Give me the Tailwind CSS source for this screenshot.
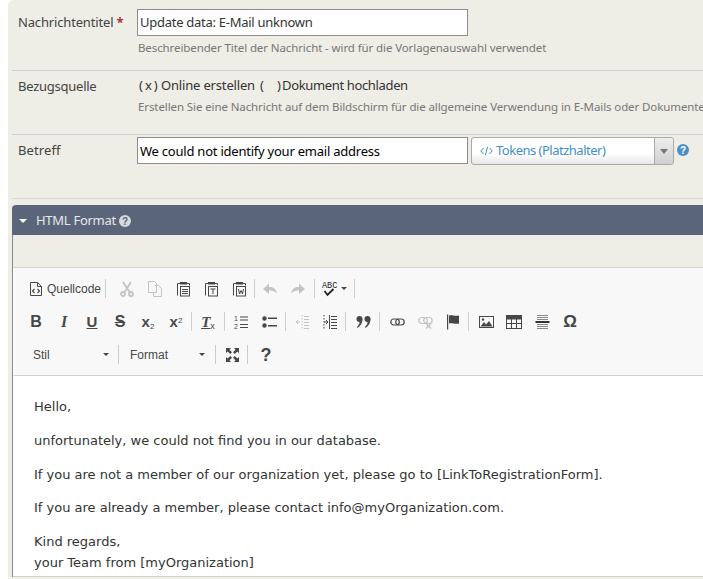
<!DOCTYPE html>
<html lang="de">
<head>
    <meta charset="UTF-8">
    <title>Nachricht bearbeiten</title>
    <script src="https://cdn.jsdelivr.net/npm/@tailwindcss/browser@4"></script>
</head>
<body class="bg-white">
<div class="w-[703px] h-[579px] overflow-hidden pl-2 font-['Noto_Sans',sans-serif] text-[13px]">
    <div class="w-[760px] bg-[#eeede6] rounded-tl-md pl-1 pb-2">
        <!-- Nachrichtentitel -->
        <div class="h-[71px] border-b border-[#cfd2da] flex">
            <label class="w-[125px] pl-[6px] pt-[13px] leading-[18px] text-[#444] tracking-[-0.16px]">Nachrichtentitel <span class="text-[#a33] font-bold">*</span></label>
            <div class="pt-[9px]">
                <input class="block w-[331px] h-[27px] bg-white border border-[#8c8c8c] px-[2px] pb-[2px] text-[13px] text-[#333] tracking-[-0.27px]" value="Update data: E-Mail unknown">
                <p class="mt-[4px] ml-px text-[11.5px] leading-[16px] text-[#777] whitespace-nowrap tracking-[-0.1px]">Beschreibender Titel der Nachricht - wird für die Vorlagenauswahl verwendet</p>
            </div>
        </div>
        <!-- Bezugsquelle -->
        <div class="h-[64px] border-b border-[#cfd2da] flex">
            <label class="w-[125px] pl-[6px] pt-[6px] leading-[18px] text-[#444] tracking-[-0.25px]">Bezugsquelle</label>
            <div class="pt-[5px]">
                <div class="flex leading-[18px] text-[#333] whitespace-nowrap">
                    <span class="ml-[2px] w-[22px] tracking-[2px]">(x)</span><span class="w-[99px] tracking-[-0.17px]">Online erstellen</span><span class="w-[22px] whitespace-pre tracking-[-0.1px]">(    )</span><span class="tracking-[-0.35px]">Dokument hochladen</span>
                </div>
                <p class="mt-[5px] ml-px text-[11.5px] leading-[16px] text-[#777] whitespace-nowrap tracking-[-0.1px]">Erstellen Sie eine Nachricht auf dem Bildschirm für die allgemeine Verwendung in E-Mails oder Dokumenten</p>
            </div>
        </div>
        <!-- Betreff -->
        <div class="h-[64px] border-b border-[#d9d9d2] flex">
            <label class="w-[125px] pl-[6px] pt-[6px] leading-[18px] text-[#444] tracking-[0.1px]">Betreff</label>
            <div class="pt-[2px] flex items-start">
                <input class="block w-[331px] h-[27px] bg-white border border-[#8c8c8c] px-[2px] text-[13px] text-black tracking-[-0.23px]" value="We could not identify your email address">
                <div class="ml-[3px] w-[203px] h-[28px] flex rounded-[3px] border border-[#aaa] bg-linear-to-b from-white from-60% to-[#e6e6e6]">
                    <div class="flex-1 flex items-center pl-[8px] text-[#3f8fcb] gap-[3px] tracking-[-0.5px]">
                        <svg width="13" height="10" viewBox="0 0 13 10" fill="none" stroke="currentColor" stroke-width="1"><path d="M3.5 2 .8 5l2.7 3M9.5 2l2.7 3-2.7 3M7.6 .8 5.4 9.2"/></svg>
                        <span>Tokens (Platzhalter)</span>
                    </div>
                    <div class="w-[19px] border-l border-[#aaa] rounded-r-[3px] bg-linear-to-b from-[#eee] to-[#cfcfcf] flex items-center justify-center">
                        <span class="w-0 h-0 border-x-[4px] border-x-transparent border-t-[5px] border-t-[#777] mt-px"></span>
                    </div>
                </div>
                <svg class="ml-[3px] mt-[7px]" width="12" height="12" viewBox="0 0 12 12"><circle cx="6" cy="6" r="6" fill="#4a90c8"/><text x="6" y="9.5" text-anchor="middle" font-size="10" font-weight="700" font-family="Liberation Sans" fill="#fff">?</text></svg>
            </div>
        </div>

        <!-- HTML Format panel -->
        <div class="mt-[6px]">
            <div class="h-[30px] bg-[#5b6579] rounded-tl-[4px] flex items-center pl-[7px] pt-px text-[#e6e8ec] tracking-[-0.28px]">
                <span class="w-0 h-0 border-x-[4px] border-x-transparent border-t-[4px] border-t-white"></span>
                <span class="ml-[9px]">HTML Format</span>
                <svg class="ml-[3px]" width="12" height="12" viewBox="0 0 12 12"><circle cx="6" cy="6" r="6" fill="#d5d8de"/><text x="6" y="9.5" text-anchor="middle" font-size="10" font-weight="700" font-family="Liberation Sans" fill="#5b6579">?</text></svg>
            </div>
            <div class="border-l border-[#8a8a8a]">
                <div class="h-[32px]"></div>
                <!-- toolbar -->
                <div class="h-[109px] bg-[#f8f8f8] border-y border-[#d1d1d1] border-l border-l-white pt-[4px] font-['Liberation_Sans',sans-serif] text-[12px] text-[#474747]">
                    <!-- row 1 -->
                    <div class="h-[33px] flex items-center pl-[15px]">
                        <svg width="14" height="16" viewBox="0 0 14 16" fill="none" stroke="#474747"><path d="M1.5 1.500h7l4 4v9h-11z"/><path d="M8.500 1.500v4h4"/><path d="M5.500 8 3.500 10l2 2M8.500 8l2 2-2 2" stroke-width="1.200"/></svg>
                        <span class="ml-[4px] w-[58px]">Quellcode</span>
                        <i class="block w-px h-[19px] bg-[#cdcdcd]"></i>
                        <span class="ml-[7px] w-7 h-4 flex justify-center text-[#c4c4c4]">
                            <svg width="16" height="16" viewBox="0 0 16 16" fill="none" stroke="currentColor" stroke-width="1.800"><path d="M4 1 10.500 11M12 1 5.500 11"/><circle cx="4" cy="13" r="2"/><circle cx="12" cy="13" r="2"/></svg>
                        </span>
                        <span class="w-7 h-4 flex justify-center text-[#c4c4c4]">
                            <svg width="16" height="16" viewBox="0 0 16 16" fill="none" stroke="currentColor"><path d="M1.500 .500h6l2 2v9h-8z"/><path d="M7.500 4.500h4l3 3v8h-8v-4"/></svg>
                        </span>
                        <span class="w-7 h-4 flex justify-center">
                            <svg width="15" height="16" viewBox="0 0 15 16" fill="none" stroke="currentColor"><path d="M4 2.500H1.500v12M11 2.500h2.500v2"/><rect x="4.500" y="5.500" width="9" height="9.500" fill="#f8f8f8"/><path d="M6 8.500h6M6 10.500h6M6 12.500h6"/><rect x="4" y="1" width="7" height="2.500" fill="currentColor" stroke="none"/></svg>
                        </span>
                        <span class="w-7 h-4 flex justify-center">
                            <svg width="15" height="16" viewBox="0 0 15 16" fill="none" stroke="currentColor"><path d="M4 2.500H1.500v12M11 2.500h2.500v2"/><rect x="4.500" y="5.500" width="9" height="9.500" fill="#f8f8f8"/><path d="M6.500 8h5M9 8v5"/><rect x="4" y="1" width="7" height="2.500" fill="currentColor" stroke="none"/></svg>
                        </span>
                        <span class="w-7 h-4 flex justify-center">
                            <svg width="15" height="16" viewBox="0 0 15 16" fill="none" stroke="currentColor"><path d="M4 2.500H1.500v12M11 2.500h2.500v2"/><rect x="4.500" y="5.500" width="9" height="9.500" fill="#f8f8f8"/><path d="M6.500 8l1 5 1.500-3.500 1.500 3.500 1-5"/><rect x="4" y="1" width="7" height="2.500" fill="currentColor" stroke="none"/></svg>
                        </span>
                        <i class="ml-[1px] block w-px h-[19px] bg-[#cdcdcd]"></i>
                        <span class="ml-[1px] w-7 h-4 flex justify-center text-[#c4c4c4]">
                            <svg width="16" height="16" viewBox="0 0 16 16" fill="currentColor"><path d="M1 8l6-5.500V6h1c4 0 6 2.500 7 6.500C13 10.500 11 9.500 8 9.500H7V13z"/></svg>
                        </span>
                        <span class="w-7 h-4 flex justify-center text-[#c4c4c4]">
                            <svg width="16" height="16" viewBox="0 0 16 16" fill="currentColor"><path d="M15 8 9 2.500V6H8C4 6 2 8.500 1 12.500 3 10.500 5 9.500 8 9.500h1V13z"/></svg>
                        </span>
                        <i class="ml-[2px] block w-px h-[19px] bg-[#cdcdcd]"></i>
                        <span class="ml-[7px] w-[16px] h-4">
                            <svg width="16" height="16" viewBox="0 0 16 16"><text x="0" y="7" font-size="8.500" font-family="Liberation Mono" fill="#222">ABC</text><path d="M2.500 10l3 4 6-6" fill="none" stroke="#222" stroke-width="1.800"/></svg>
                        </span>
                        <span class="ml-[3px] w-0 h-0 border-x-[3px] border-x-transparent border-t-[3px] border-t-[#474747]"></span>
                        <i class="ml-[7px] block w-px h-[19px] bg-[#cdcdcd]"></i>
                    </div>
                    <!-- row 2 -->
                    <div class="h-[33px] flex items-center pl-[8px]">
                        <span class="w-7 text-center text-[16px] font-bold leading-4">B</span>
                        <span class="w-7 text-center text-[16px] font-bold italic leading-4 font-['Liberation_Serif',serif]">I</span>
                        <span class="w-7 text-center text-[15px] font-bold underline leading-4">U</span>
                        <span class="w-7 text-center text-[16px] font-bold line-through leading-4">S</span>
                        <span class="w-7 text-center text-[15px] font-bold leading-4">x<sub class="text-[8px] font-normal">2</sub></span>
                        <span class="w-7 text-center text-[15px] font-bold leading-4">x<sup class="text-[8px] font-normal">2</sup></span>
                        <i class="block w-px h-[19px] bg-[#cdcdcd] ml-[1px] mr-[2px]"></i>
                        <span class="w-7 text-center text-[15px] font-bold italic underline leading-4 font-['Liberation_Serif',serif]">T<sub class="text-[9px] not-italic font-normal font-['Liberation_Sans',sans-serif]">x</sub></span>
                        <i class="block w-px h-[19px] bg-[#cdcdcd] ml-[2px] mr-[2px]"></i>
                        <span class="w-7 h-4 flex justify-center">
                            <svg width="15" height="16" viewBox="0 0 15 16"><text x="0" y="7" font-size="7" font-family="Liberation Sans" fill="#474747">1</text><text x="0" y="15" font-size="7" font-family="Liberation Sans" fill="#474747">2</text><path d="M6 3h8M6 6h8M6 10.500h8M6 13.500h8" fill="none" stroke="#474747" stroke-width="1.200"/></svg>
                        </span>
                        <span class="w-7 h-4 flex justify-center">
                            <svg width="15" height="16" viewBox="0 0 15 16" fill="currentColor"><circle cx="2.500" cy="4.500" r="2.200"/><circle cx="2.500" cy="11.500" r="2.200"/><path d="M6 3.500h9v1.600H6zM6 11h9v1.600H6z"/></svg>
                        </span>
                        <i class="block w-px h-[19px] bg-[#cdcdcd] ml-[2px] mr-[2px]"></i>
                        <span class="w-7 h-4 flex justify-center text-[#c4c4c4]">
                            <svg width="15" height="16" viewBox="0 0 15 16" fill="none" stroke="currentColor"><path d="M9 2.500h5M9 5.500h5M9 8.500h5M9 11.500h5M9 14.500h5"/><path d="M7 1v14" stroke-dasharray="1.500 1.500"/><path d="M5 8H1M3 6 1 8l2 2"/></svg>
                        </span>
                        <span class="w-7 h-4 flex justify-center">
                            <svg width="15" height="16" viewBox="0 0 15 16" fill="none" stroke="currentColor"><path d="M8 2.500h6M8 5.500h6M8 8.500h6M8 11.500h6M8 14.500h6M6.500 1v14"/><path d="M1 1v14" stroke-dasharray="1.500 1.500"/><path d="M1 8h3.500M3 6l2 2-2 2"/></svg>
                        </span>
                        <i class="block w-px h-[19px] bg-[#cdcdcd] ml-[1px] mr-[3px]"></i>
                        <span class="w-7 h-4 flex justify-center">
                            <svg width="15" height="16" viewBox="0 0 15 16" fill="currentColor"><circle cx="3.500" cy="5" r="3"/><path d="M6.500 5c0 4-2 7-5 9l-.5-1c1.500-1.500 2.500-3 2.500-5z"/><circle cx="11.500" cy="5" r="3"/><path d="M14.500 5c0 4-2 7-5 9l-.5-1c1.500-1.500 2.500-3 2.500-5z"/></svg>
                        </span>
                        <i class="block w-px h-[19px] bg-[#cdcdcd] ml-[2px] mr-[3px]"></i>
                        <span class="w-7 h-4 flex justify-center">
                            <svg width="15" height="16" viewBox="0 0 15 16" fill="none" stroke="currentColor" stroke-width="1.200"><rect x=".8" y="5" width="8.500" height="6" rx="3"/><rect x="5.700" y="5" width="8.500" height="6" rx="3"/></svg>
                        </span>
                        <span class="w-7 h-4 flex justify-center text-[#c4c4c4]">
                            <svg width="15" height="16" viewBox="0 0 15 16" fill="none" stroke="currentColor" stroke-width="1.200"><rect x=".8" y="3.500" width="8.500" height="6" rx="3"/><rect x="5.700" y="3.500" width="8.500" height="6" rx="3"/><path d="M8 9.500l5 5M13 9.500l-5 5" stroke-width="1.500"/></svg>
                        </span>
                        <span class="w-7 h-4 flex justify-center">
                            <svg width="15" height="16" viewBox="0 0 15 16" fill="currentColor"><path d="M1 .500h1.200v15H1zM3 1.500c3-1 6 1 10 0v8c-4 1-7-1-10 0z"/></svg>
                        </span>
                        <i class="block w-px h-[19px] bg-[#cdcdcd] ml-[1px] mr-[3px]"></i>
                        <span class="w-7 h-4 flex justify-center">
                            <svg width="15" height="16" viewBox="0 0 15 16"><rect x=".5" y="2.500" width="14" height="11" fill="none" stroke="#474747"/><circle cx="4" cy="5.500" r="1.200" fill="#474747"/><path d="M1.500 12.500 5 8l2 2.500L10 7l3.500 5.500z" fill="#474747"/></svg>
                        </span>
                        <span class="w-7 h-4 flex justify-center">
                            <svg width="16" height="16" viewBox="0 0 16 16" fill="none" stroke="#474747"><rect x=".5" y="1.500" width="15" height="13"/><path d="M.5 3.500h15" stroke-width="4"/><path d="M.5 9.500h15M5.500 5v9M10.500 5v9"/></svg>
                        </span>
                        <span class="w-7 h-4 flex justify-center">
                            <svg width="15" height="16" viewBox="0 0 15 16" fill="none" stroke="#8a8a8a"><path d="M2 1.500h11M2 3.500h11M2 5.500h11M2 10.500h11M2 12.500h11M2 14.500h11"/><path d="M.5 8h14" stroke="#333" stroke-width="2"/></svg>
                        </span>
                        <span class="w-7 text-center text-[17px] font-bold leading-4">Ω</span>
                    </div>
                    <!-- row 3 -->
                    <div class="h-[33px] flex items-center pl-[19px]">
                        <span class="w-[70px]">Stil</span>
                        <span class="w-0 h-0 border-x-[3px] border-x-transparent border-t-[3px] border-t-[#474747]"></span>
                        <i class="ml-[9px] block w-px h-[19px] bg-[#cdcdcd]"></i>
                        <span class="ml-[11px] w-[69px]">Format</span>
                        <span class="w-0 h-0 border-x-[3px] border-x-transparent border-t-[3px] border-t-[#474747]"></span>
                        <i class="ml-[10px] block w-px h-[19px] bg-[#cdcdcd]"></i>
                        <span class="ml-[2px] w-7 h-4 flex justify-center">
                            <svg width="15" height="16" viewBox="0 0 15 16" fill="#474747"><path d="M1 1h5L4.500 2.700 7 5.200 5.200 7 2.700 4.500 1 6zM14 1v5l-1.700-1.500L9.800 7 8 5.200l2.500-2.500L9 1zM1 15v-5l1.700 1.500L5.200 9 7 10.800l-2.500 2.500L6 15zM14 15H9l1.500-1.700L8 10.800 9.800 9l2.500 2.500L14 10z"/></svg>
                        </span>
                        <i class="block w-px h-[19px] bg-[#cdcdcd] ml-[1px] mr-[2px]"></i>
                        <span class="w-7 text-center text-[18px] font-bold leading-4 ml-[2px]">?</span>
                    </div>
                </div>
                <!-- editor -->
                <div class="h-[201px] bg-white border-b border-[#d1d1d1] pt-[21px] pl-[21px] font-['DejaVu_Sans',sans-serif] text-[13px] leading-[20.8px] text-[#333] whitespace-nowrap">
                    <p class="mb-[13px]">Hello,</p>
                    <p class="mb-[13px]">unfortunately, we could not find you in our database.</p>
                    <p class="mb-[13px]">If you are not a member of our organization yet, please go to [LinkToRegistrationForm].</p>
                    <p class="mb-[13px]">If you are already a member, please contact info@myOrganization.com.</p>
                    <p>Kind regards,<br>your Team from [myOrganization]</p>
                </div>
            </div>
        </div>
    </div>
</div>
</body>
</html>
